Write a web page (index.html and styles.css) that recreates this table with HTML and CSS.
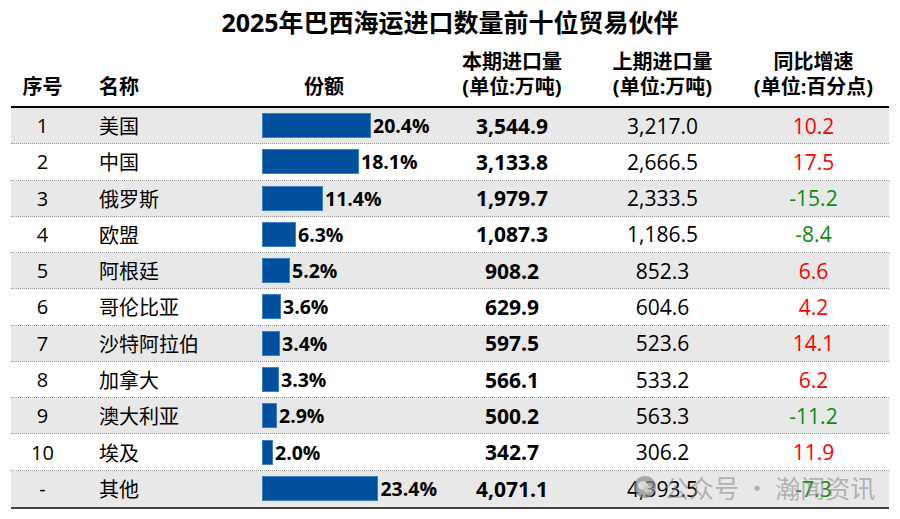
FILE: index.html
```html
<!DOCTYPE html>
<html lang="zh">
<head>
<meta charset="utf-8">
<title>2025年巴西海运进口数量前十位贸易伙伴</title>
<link rel="stylesheet" href="styles.css">
</head>
<body>
<div class="page">
  <h1 class="title">2025年巴西海运进口数量前十位贸易伙伴</h1>
  <div class="table">
    <div class="head">
      <div class="h c-no">序号</div>
      <div class="h c-name">名称</div>
      <div class="h c-share">份额</div>
      <div class="h c-num">本期进口量<br>(单位:万吨)</div>
      <div class="h c-num">上期进口量<br>(单位:万吨)</div>
      <div class="h c-num">同比增速<br>(单位:百分点)</div>
    </div>
    <div class="body">
      <div class="row alt"><div class="c-no">1</div><div class="c-name">美国</div><div class="c-share"><span class="bar" style="width:109px"></span><b>20.4%</b></div><div class="c-cur">3,544.9</div><div class="c-prev">3,217.0</div><div class="c-yoy up">10.2</div></div>
      <div class="row"><div class="c-no">2</div><div class="c-name">中国</div><div class="c-share"><span class="bar" style="width:97px"></span><b>18.1%</b></div><div class="c-cur">3,133.8</div><div class="c-prev">2,666.5</div><div class="c-yoy up">17.5</div></div>
      <div class="row alt"><div class="c-no">3</div><div class="c-name">俄罗斯</div><div class="c-share"><span class="bar" style="width:61px"></span><b>11.4%</b></div><div class="c-cur">1,979.7</div><div class="c-prev">2,333.5</div><div class="c-yoy down">-15.2</div></div>
      <div class="row"><div class="c-no">4</div><div class="c-name">欧盟</div><div class="c-share"><span class="bar" style="width:34px"></span><b>6.3%</b></div><div class="c-cur">1,087.3</div><div class="c-prev">1,186.5</div><div class="c-yoy down">-8.4</div></div>
      <div class="row alt"><div class="c-no">5</div><div class="c-name">阿根廷</div><div class="c-share"><span class="bar" style="width:28px"></span><b>5.2%</b></div><div class="c-cur">908.2</div><div class="c-prev">852.3</div><div class="c-yoy up">6.6</div></div>
      <div class="row"><div class="c-no">6</div><div class="c-name">哥伦比亚</div><div class="c-share"><span class="bar" style="width:19px"></span><b>3.6%</b></div><div class="c-cur">629.9</div><div class="c-prev">604.6</div><div class="c-yoy up">4.2</div></div>
      <div class="row alt"><div class="c-no">7</div><div class="c-name">沙特阿拉伯</div><div class="c-share"><span class="bar" style="width:18px"></span><b>3.4%</b></div><div class="c-cur">597.5</div><div class="c-prev">523.6</div><div class="c-yoy up">14.1</div></div>
      <div class="row"><div class="c-no">8</div><div class="c-name">加拿大</div><div class="c-share"><span class="bar" style="width:17px"></span><b>3.3%</b></div><div class="c-cur">566.1</div><div class="c-prev">533.2</div><div class="c-yoy up">6.2</div></div>
      <div class="row alt"><div class="c-no">9</div><div class="c-name">澳大利亚</div><div class="c-share"><span class="bar" style="width:15px"></span><b>2.9%</b></div><div class="c-cur">500.2</div><div class="c-prev">563.3</div><div class="c-yoy down">-11.2</div></div>
      <div class="row"><div class="c-no">10</div><div class="c-name">埃及</div><div class="c-share"><span class="bar" style="width:11px"></span><b>2.0%</b></div><div class="c-cur">342.7</div><div class="c-prev">306.2</div><div class="c-yoy up">11.9</div></div>
      <div class="row alt last"><div class="c-no">-</div><div class="c-name">其他</div><div class="c-share"><span class="bar" style="width:125px"></span><b>23.4%</b></div><div class="c-cur">4,071.1</div><div class="c-prev">4,393.5</div><div class="c-yoy down">-7.3</div></div>
    </div>
  </div>
  <div class="watermark">
    <svg class="wm-icon" width="22" height="22" viewBox="0 0 22 22" aria-hidden="true">
      <circle cx="11" cy="11" r="11" fill="#8c8c8c"/>
      <ellipse cx="9" cy="9.5" rx="5.2" ry="4.3" fill="#d6d6d6"/>
      <ellipse cx="13.5" cy="13" rx="4.3" ry="3.6" fill="#bdbdbd"/>
    </svg>
    <span>公众号 · 瀚闻资讯</span>
  </div>
</div>
</body>
</html>
```
FILE: styles.css
```css
html, body {
  margin: 0;
  padding: 0;
  background: #ffffff;
}

.page {
  position: relative;
  width: 900px;
  height: 519px;
  font-family: "Open Sans", "Noto Sans CJK SC", sans-serif;
  color: #000;
}

.title {
  margin: 0;
  height: 45px;
  line-height: 45px;
  text-align: center;
  font-size: 25px;
  font-weight: 700;
}

.table {
  margin: 0 11px;
  width: 878px;
}

.head,
.row {
  display: grid;
  grid-template-columns: 63px 176px 187px 150px 151px 151px;
}

.head {
  height: 61px;
  border-bottom: 2px solid #000;
  align-items: end;
}

.h {
  font-size: 20px;
  font-weight: 700;
  line-height: 25px;
  padding-bottom: 7px;
}

.head .c-no { text-align: center; }
.head .c-name { padding-left: 25px; }
.head .c-share { padding-left: 54px; }
.head .c-num { text-align: center; }

.body {
  display: grid;
  grid-template-rows: repeat(11, 1fr);
  height: 399px;
  border-bottom: 2px solid #444;
}

.row {
  align-items: center;
  font-size: 20px;
  border-bottom: 1px dotted #9a9a9a;
}

.row.last {
  border-bottom: none;
}

.row.alt {
  background: #e8e8e8;
}

.row .c-no {
  text-align: center;
}

.row .c-name {
  padding-left: 25px;
}

.row .c-share {
  display: flex;
  align-items: center;
  padding-left: 12px;
  white-space: nowrap;
}

.bar {
  display: block;
  height: 25px;
  box-sizing: border-box;
  background: #00519d;
  border: 1px solid #3f7fc2;
}

.c-share b {
  margin-left: 2px;
  font-size: 19.5px;
  font-weight: 700;
}

.c-cur,
.c-prev,
.c-yoy {
  text-align: center;
  font-size: 21px;
}

.c-cur {
  font-weight: 700;
}

.up {
  color: #ff0000;
}

.down {
  color: #0e8c0e;
}

.watermark {
  position: absolute;
  left: 634px;
  top: 469px;
  display: flex;
  align-items: center;
  gap: 8px;
  font-family: "Noto Sans CJK SC", sans-serif;
  font-size: 25px;
  color: rgba(130, 130, 130, 0.55);
  pointer-events: none;
}

.wm-icon {
  opacity: 0.7;
}
```
